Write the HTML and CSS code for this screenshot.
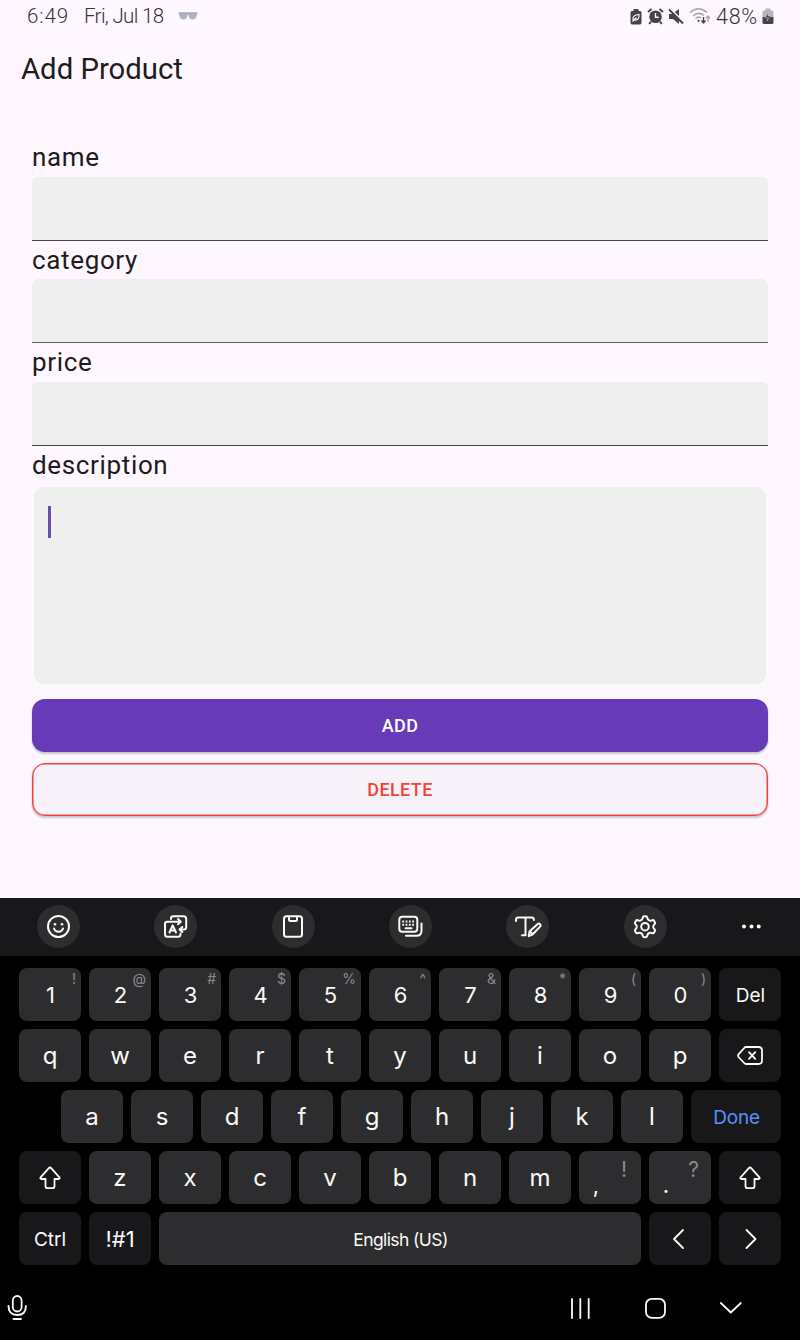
FILE: index.html
```html
<!DOCTYPE html>
<html lang="en">
<head>
<meta charset="utf-8">
<title>Add Product</title>
<link rel="stylesheet" href="styles.css">
</head>
<body>
<div class="screen">
  <header class="status">
    <span class="time">6:49</span>
    <span class="date">Fri, Jul 18</span>
    <svg class="glasses" width="20" height="10" viewBox="0 0 20 10"><path d="M.5 1.500H19.500L19 3C18.500 7 17 8.500 14.500 8.500 12 8.500 11 7 10.500 4H9.500C9 7 8 8.500 5.500 8.500 3 8.500 1.500 7 1 3Z" fill="#aeb4c4"/><path d="M.5 2H19.500" stroke="#9fa4b3"/></svg>
    <div class="status-icons">
      <svg width="12" height="17" viewBox="0 0 12 17"><path d="M3.500 1h5v2H10q1.500 0 1.500 1.500v10Q11.500 16.500 10 16.500H2Q.5 16.500.5 14.500v-10Q.5 3 2 3h1.500Z" fill="#454347"/><path d="M3 12Q2 7 9 6.500 9.500 12.500 4.500 12M2.500 13.500 6.500 9.500" fill="none" stroke="#fef7ff" stroke-width="1.200"/></svg>
      <svg width="17" height="17" viewBox="0 0 17 17"><circle cx="8.500" cy="8.800" r="6.300" fill="#454347"/><path d="M1 4 4.500 1M16 4 12.500 1M4 13.500 2.200 16M13 13.500 14.800 16" stroke="#454347" stroke-width="2"/><path d="M8.500 5v4.200h3.200" fill="none" stroke="#fef7ff" stroke-width="1.400"/></svg>
      <svg width="16" height="17" viewBox="0 0 16 17"><path d="M1 6h3L11 1v15L5 11H1Z" fill="#454347"/><path d="M2.500 1 15.500 13.500" stroke="#fef7ff" stroke-width="1.600"/><path d="M1 1.500 15 15.500" stroke="#454347" stroke-width="1.900"/></svg>
      <svg width="22" height="18" viewBox="0 0 22 18"><path d="M1 5.500Q9.500-2 18 5.500M4 9Q9.500 4 15 8.500M6.500 11.500Q9.500 9 12 11" fill="none" stroke="#aaa5ac" stroke-width="1.600"/><circle cx="9.500" cy="13.800" r="1.100" fill="#454347"/><path d="M14.500 10v6M12.500 13.500 14.500 16l2-2.500" fill="none" stroke="#454347" stroke-width="1.400"/><path d="M19 15V9M17 11.500 19 9l2 2.500" fill="none" stroke="#aaa5ac" stroke-width="1.400"/></svg>
      <span class="percent">48%</span>
      <svg width="12" height="17" viewBox="0 0 12 17"><path d="M3.500.5h5v2H10q1.500 0 1.500 1.500v5H.5V4Q.5 2.500 2 2.500h1.500Z" fill="#b9b4bb"/><path d="M.5 9h11v5.500q0 1.500-1.500 1.500H2Q.5 16 .5 14.500Z" fill="#454347"/><path d="M6.500 4.500 3 9.800h3L5 13l4-5H6Z" fill="#454347" stroke="#d6d0d8" stroke-width=".5"/></svg>
    </div>
  </header>
  <h1 class="title">Add Product</h1>
  <main class="form">
    <label class="label">name</label><div class="field"></div>
    <label class="label tight">category</label><div class="field second"></div>
    <label class="label">price</label><div class="field"></div>
    <label class="label">description</label>
    <div class="area"><span class="caret"></span></div>
    <button class="btn add">ADD</button>
    <button class="btn delete">DELETE</button>
  </main>

  <section class="keyboard">
    <div class="tools">
      <span class="tool"><svg width="26" height="26" viewBox="0 0 26 26"><circle cx="12.500" cy="12.500" r="10.500"/><path d="M8 14.500q1 3.200 4.500 3.200t4.500-3.200"/><circle class="dot" cx="9" cy="10.200" r="1.300"/><circle class="dot" cx="16" cy="10.200" r="1.300"/></svg></span>
      <span class="tool"><svg width="26" height="26" viewBox="0 0 26 26"><path d="M8 5V4.500q0-2.200 2.200-2.200H20.500q2.700 0 2.700 2.700v8q0 2.500-2.500 2.500H17M19.300 13 16.500 15.500l2.800 2.500M8 7.700H17.500M15 5l2.800 2.700L15 10.400M13 7.700H4.200Q2 7.700 2 10v10.200q0 2.600 2.500 2.600h10.500q2.500 0 2.500-2.500V19.500M6.500 18.500 9.700 11.300l3.300 7.200M7.800 16.500h3.800"/></svg></span>
      <span class="tool"><svg width="26" height="26" viewBox="0 0 26 26"><rect x="4" y="2.300" width="18" height="20.500" rx="2.500"/><path d="M9 2.500v3.200q0 1.200 1.200 1.200h5.600q1.200 0 1.200-1.200V2.500"/></svg></span>
      <span class="tool"><svg width="26" height="26" viewBox="0 0 26 26"><rect x="2.300" y="2.700" width="18" height="15" rx="3"/><path d="M24.500 9.500v7.200q0 5-5 5H9M8.500 14.200h6"/><path d="M5.300 7.500h12.500M5.300 10.700h12.500" stroke-dasharray="1.800 1.500" stroke-linecap="butt"/></svg></span>
      <span class="tool"><svg width="28" height="26" viewBox="0 0 28 26"><path d="M2 7V6q0-2.400 2.200-2.400h13.500q2.200 0 2.200 2.400M11.500 4v17.300M8 21.200h3.500M14.700 22.200l.8-4.700 8.200-7.500q1.200-1 2.300.2t.2 2.300l-7.700 8ZM16 17.500l2.800 2.700"/></svg></span>
      <span class="tool"><svg width="26" height="26" viewBox="0 0 26 26"><circle cx="13" cy="12.700" r="3.800"/><path transform="translate(0 -.3)" d="M10.800 3.800q.2-1.300 1.400-1.300h1.600q1.200 0 1.400 1.300.4 2.200 2 2.900 1.200.6 2.900-.1 1.400-.5 2 .6l.8 1.400q.6 1-.4 1.900-1.300 1-1.300 2.500t1.300 2.500q1 .9.400 1.900l-.8 1.400q-.6 1.100-2 .6-1.700-.7-2.900-.1-1.600.7-2 2.900-.2 1.300-1.400 1.300h-1.600q-1.200 0-1.400-1.300-.4-2.200-2-2.900-1.200-.6-2.900.1-1.400.5-2-.6l-.8-1.400q-.6-1 .4-1.900 1.300-1 1.300-2.500t-1.300-2.500q-1-.9-.4-1.900l.8-1.400q.6-1.100 2-.6 1.700.7 2.900.1 1.600-.7 2-2.900Z"/></svg></span>
      <svg width="20" height="8" viewBox="0 0 20 8"><circle class="dot" cx="3" cy="3.500" r="2"/><circle class="dot" cx="10.500" cy="3.500" r="2"/><circle class="dot" cx="17.700" cy="3.500" r="2"/></svg>
    </div>
    <div class="keys">
      <div class="row">
        <span class="key">1<sup>!</sup></span><span class="key">2<sup>@</sup></span><span class="key">3<sup>#</sup></span><span class="key">4<sup>$</sup></span><span class="key">5<sup>%</sup></span><span class="key">6<sup>^</sup></span><span class="key">7<sup>&amp;</sup></span><span class="key">8<sup>*</sup></span><span class="key">9<sup>(</sup></span><span class="key">0<sup>)</sup></span><span class="key dark word">Del</span>
      </div>
      <div class="row letters">
        <span class="key">q</span><span class="key">w</span><span class="key">e</span><span class="key">r</span><span class="key">t</span><span class="key">y</span><span class="key">u</span><span class="key">i</span><span class="key">o</span><span class="key">p</span>
        <span class="key dark icon"><svg width="28" height="22" viewBox="0 0 28 22"><path d="M10 2h12.500q3.500 0 3.500 3.500v10q0 3.500-3.500 3.500H10q-1 0-1.800-1L2.500 12q-1-1.300 0-2.600L8.200 3q.8-1 1.800-1ZM13 7.200l6.200 6.600M19.200 7.200l-6.200 6.600"/></svg></span>
      </div>
      <div class="row letters home">
        <span class="key">a</span><span class="key">s</span><span class="key">d</span><span class="key">f</span><span class="key">g</span><span class="key">h</span><span class="key">j</span><span class="key">k</span><span class="key">l</span><span class="key dark word done">Done</span>
      </div>
      <div class="row letters">
        <span class="key dark icon"><svg width="26" height="26" viewBox="0 0 26 26"><path d="M11.600 3.300q1.400-1.600 2.800 0l7.800 8.800q1.300 1.900-.7 1.900H17.500v6.900q0 2.300-2.300 2.300h-4.400q-2.300 0-2.300-2.300V14H4.500q-2 0-.7-1.900Z"/></svg></span>
        <span class="key">z</span><span class="key">x</span><span class="key">c</span><span class="key">v</span><span class="key">b</span><span class="key">n</span><span class="key">m</span><span class="key punct">,<sup class="bang">!</sup></span><span class="key punct">.<sup>?</sup></span>
        <span class="key dark icon"><svg width="26" height="26" viewBox="0 0 26 26"><path d="M11.600 3.300q1.400-1.600 2.800 0l7.800 8.800q1.300 1.900-.7 1.900H17.500v6.900q0 2.300-2.300 2.300h-4.400q-2.300 0-2.300-2.300V14H4.500q-2 0-.7-1.900Z"/></svg></span>
      </div>
      <div class="row">
        <span class="key dark word ctrl">Ctrl</span><span class="key dark sym">!#1</span><span class="key space">English (US)</span>
        <span class="key dark icon"><svg width="24" height="24" viewBox="0 0 24 24"><path d="M15 3 6 12l9 9"/></svg></span>
        <span class="key dark icon"><svg width="24" height="24" viewBox="0 0 24 24"><path d="M8.500 3 17.500 12l-9 9"/></svg></span>
      </div>
    </div>
    <nav class="nav">
      <svg class="mic" width="22" height="28" viewBox="0 0 22 28"><rect x="6.800" y="2" width="8.800" height="15.500" rx="4.400"/><path d="M2.500 12q0 9 8.700 9t8.700-9M7.500 25h7.500" stroke-width="1.900"/></svg>
      <svg width="22" height="22" viewBox="0 0 22 22"><path d="M3 2v19M11.300 2v19M19.700 2v19"/></svg>
      <svg width="22" height="22" viewBox="0 0 22 22"><rect x="2" y="1.800" width="19" height="19" rx="5.800"/></svg>
      <svg width="24" height="22" viewBox="0 0 24 22"><path d="M1.800 6 11.800 15.500 21.800 6"/></svg>
    </nav>
  </section>
</div>
</body>
</html>
```
FILE: styles.css
```css
* { box-sizing: border-box; }
body { margin: 0; background: #fef7ff; font-family: Roboto, sans-serif; color: #1d1b20; }
.screen { width: 800px; height: 1340px; overflow: hidden; display: flex; flex-direction: column; }

.status { height: 32px; display: flex; align-items: center; padding: 0 26px 0 27px; font-size: 20.500px; font-weight: 300; color: #353337; white-space: nowrap; }
.time { width: 43px; letter-spacing: .9px; }
.date { width: 80px; margin-left: 14px; letter-spacing: -.65px; }
.glasses { margin-left: 14px; }
.status-icons { margin-left: auto; display: flex; align-items: center; gap: 4.500px; }
.percent { width: 44px; margin: 0 -2.500px 0 1px; font-size: 21.500px; letter-spacing: .7px; }

.title { margin: 0; height: 75px; padding-left: 21px; font-size: 29.300px; font-weight: 400; line-height: 75px; }

.form { height: 791px; padding: 31px 32px 0; display: flex; flex-direction: column; flex: none; }
.label { height: 39px; font-size: 26px; line-height: 38px; letter-spacing: .65px; }
.label.tight { height: 38px; }
.field { height: 64px; background: #efefef; border-bottom: 1px solid #49454f; border-radius: 6px 6px 0 0; }
.field.second { border-color: #625f67; }
.area { height: 201px; background: #efefef; border: 1px solid #fff; box-shadow: inset 0 0 0 .5px #fff; border-radius: 13px; padding: 20px 15px; }
.caret { display: block; width: 3px; height: 32px; background: #6750a4; }
.btn { height: 53px; flex: none; border: 0; border-radius: 13px; font: 500 18px Roboto, sans-serif; letter-spacing: .4px; box-shadow: 0 2px 2px rgba(0, 0, 0, .16), 0 1px 3px rgba(0, 0, 0, .1); }
.add { margin-top: 13px; background: #673ab7; color: #fff; }
.delete { margin-top: 11px; background: #f7f2fa; color: #f44336; border: 1px solid #f44336; box-shadow: inset 0 0 0 .5px #f44336, 0 2px 2px rgba(0, 0, 0, .16), 0 1px 3px rgba(0, 0, 0, .1); }

.keyboard { height: 442px; flex: none; background: #000; color: #fafafa; font-family: Inter, sans-serif; }
.keyboard svg { fill: none; stroke: #fafafa; stroke-width: 1.800; stroke-linecap: round; stroke-linejoin: round; }
.keyboard .tool svg { stroke-width: 2; }
.keyboard .dot { fill: #fafafa; stroke: none; }
.tools { height: 58px; background: #18181a; display: flex; align-items: center; justify-content: space-between; padding: 0 39px 1px 37px; }
.tool { width: 43px; height: 43px; border-radius: 50%; background: #2d2d2f; display: grid; place-items: center; }
.keys { padding: 12px 19px 0; display: grid; gap: 8px; }
.row { display: flex; gap: 8px; height: 53px; }
.home { padding-left: 42px; }
.key { position: relative; width: 62px; height: 53px; border-radius: 8px; background: #2d2d2f; display: flex; align-items: center; justify-content: center; font-size: 22px; padding: 1px 0 0 1px; }
.letters .key { font-size: 24px; padding: 0 0 1px; }
.key.dark { background: #18181a; }
.row .key.icon { padding: 1px 0 0; }
.key sup { position: absolute; top: 2px; right: 5px; font-size: 14px; line-height: 17px; color: #8b8b8d; }
.key.word, .letters .key.word { font-size: 19px; padding: 2px 0 0 1px; }
.key.done { width: 90px; color: #5a90fa; letter-spacing: -.2px; }
.row .key.ctrl { padding-left: 0; }
.key.sym { font-size: 22px; padding-left: 0; }
.key.space { width: 482px; font-size: 17.500px; letter-spacing: -.6px; }
.letters .key.punct { font-size: 22px; padding: 14px 28px 0 0; }
.letters .punct sup { top: 6px; right: 12px; font-size: 21px; line-height: 25px; }
.letters .punct .bang { right: 14px; }
.nav { height: 86px; display: flex; align-items: center; justify-content: flex-end; gap: 53px; padding: 0 57px 0 6px; }
.mic { margin-right: auto; }
```
